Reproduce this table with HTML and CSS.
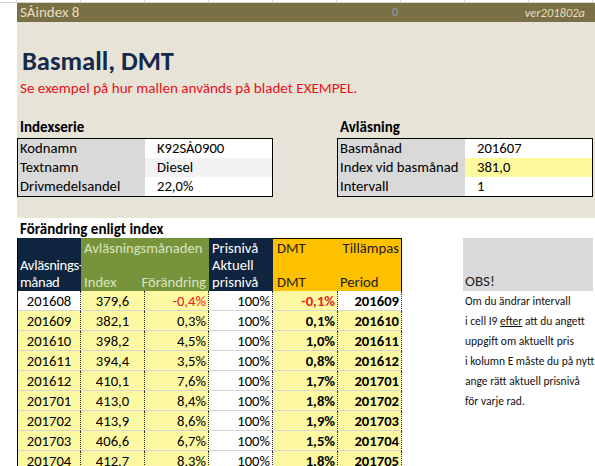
FILE: index.html
```html
<!DOCTYPE html>
<html lang="sv">
<head>
<meta charset="utf-8">
<title>SÅindex 8 – Basmall, DMT</title>
<link rel="stylesheet" href="styles.css">
</head>
<body>
<div class="strip"></div>
<div class="sheet">
  <header class="band">
    <span class="band-name">SÅindex 8</span>
    <span class="band-zero">0</span>
    <span class="band-ver">ver201802a</span>
  </header>

  <section class="intro">
    <h1 class="title">Basmall, DMT</h1>
    <p class="note">Se exempel på hur mallen används på bladet EXEMPEL.</p>
    <div class="panels">
      <div class="panel">
        <h2 class="panel-title">Indexserie</h2>
        <div class="kv">
          <div class="kv-label">Kodnamn</div><div class="kv-value">K92SÅ0900</div>
          <div class="kv-label">Textnamn</div><div class="kv-value kv-light">Diesel</div>
          <div class="kv-label">Drivmedelsandel</div><div class="kv-value">22,0%</div>
        </div>
      </div>
      <div class="panel">
        <h2 class="panel-title">Avläsning</h2>
        <div class="kv">
          <div class="kv-label">Basmånad</div><div class="kv-value">201607</div>
          <div class="kv-label">Index vid basmånad</div><div class="kv-value kv-yellow">381,0</div>
          <div class="kv-label">Intervall</div><div class="kv-value">1</div>
        </div>
      </div>
    </div>
  </section>

  <section class="lower">
    <h2 class="lower-title">Förändring enligt index</h2>
    <div class="lower-body">
      <div class="tbl">
        <div class="thead">
          <div class="th th-navy th-a"><span>Avläsnings-</span><span>månad</span></div>
          <div class="th th-green">
            <span class="th-pad">Avläsningsmånaden</span>
            <span class="th-pad">&nbsp;</span>
            <span class="th-split"><span>Index</span><span>Förändring</span></span>
          </div>
          <div class="th th-navy th-d"><span>Prisnivå</span><span>Aktuell</span><span>prisnivå</span></div>
          <div class="th th-orange">
            <span class="th-pair"><span>DMT</span><span class="th-right">Tillämpas</span></span>
            <span class="th-pair"><span>&nbsp;</span><span></span></span>
            <span class="th-pair"><span>DMT</span><span>Period</span></span>
          </div>
        </div>
        <div class="tbody" id="tbody"></div>
      </div>
      <aside class="obs">
        <div class="obs-head">OBS!</div>
        <p class="obs-line">Om du ändrar intervall</p>
        <p class="obs-line">i cell I9 <u>efter</u> att du angett</p>
        <p class="obs-line">uppgift om aktuellt pris</p>
        <p class="obs-line">i kolumn E måste du på nytt</p>
        <p class="obs-line">ange rätt aktuell prisnivå</p>
        <p class="obs-line">för varje rad.</p>
      </aside>
    </div>
  </section>
</div>
<script src="app.js"></script>
</body>
</html>
```

FILE: app.js
```js
const rows = [
  ["201608","379,6","-0,4%","100%","-0,1%","201609"],
  ["201609","382,1","0,3%","100%","0,1%","201610"],
  ["201610","398,2","4,5%","100%","1,0%","201611"],
  ["201611","394,4","3,5%","100%","0,8%","201612"],
  ["201612","410,1","7,6%","100%","1,7%","201701"],
  ["201701","413,0","8,4%","100%","1,8%","201702"],
  ["201702","413,9","8,6%","100%","1,9%","201703"],
  ["201703","406,6","6,7%","100%","1,5%","201704"],
  ["201704","412,7","8,3%","100%","1,8%","201705"]
];
const body = document.getElementById("tbody");
rows.forEach((r, i) => {
  const row = document.createElement("div");
  row.className = "tr" + (i === 0 ? " tr-first" : "");
  const cls = ["c-a","c-b","c-c","c-d","c-e","c-f"];
  r.forEach((v, j) => {
    const c = document.createElement("div");
    c.className = "td " + cls[j] + (v.startsWith("-") ? " neg" : "");
    c.textContent = v;
    row.appendChild(c);
  });
  body.appendChild(row);
});
```

FILE: styles.css
```css
* { box-sizing: border-box; margin: 0; padding: 0; }
html, body { width: 595px; height: 466px; overflow: hidden; background: #fff; }
body {
  font-family: Carlito, Lato, "Liberation Sans", sans-serif;
  font-size: 14.67px;
  color: #000;
}

.strip {
  height: 3px;
  border-bottom: 1px solid #d4d4d4;
  background: repeating-linear-gradient(90deg, transparent 0 16px, #d4d4d4 16px 17px, transparent 17px 64px);
}

.sheet { margin-left: 17px; }

.band {
  display: grid;
  grid-template-columns: 321px 64px 1fr;
  height: 19px;
  line-height: 19px;
  background: #7a7045;
  color: #e6dfc2;
}
.band-name { padding-left: 3px; font-size: 15px; }
.band-zero { text-align: right; padding-right: 4px; color: #8e9aa8; font-size: 12px; }
.band-ver { text-align: right; padding-right: 10px; font-style: italic; font-size: 12.5px; }

.intro {
  height: 196px;
  background: #e7e3d6;
  padding-top: 24px;
}
.title {
  font-size: 26.5px;
  line-height: 30px;
  font-weight: 700;
  color: #15294a;
  padding-left: 5px;
}
.note {
  margin-top: 3px;
  font-size: 15.1px;
  line-height: 18px;
  color: #e8111b;
  padding-left: 3px;
}

.panels {
  display: flex;
  gap: 64px;
  margin-top: 21px;
}
.panel { width: 256px; }
.panel-title {
  font-size: 15px;
  font-weight: 700;
  line-height: 18px;
  padding-left: 3px;
  margin-bottom: 2px;
}
.kv {
  display: grid;
  grid-template-columns: 127px 1fr;
  grid-auto-rows: 19px;
  border: 1px solid #000;
  line-height: 19px;
}
.kv-label { background: #d9d9d9; padding-left: 2px; white-space: nowrap; }
.kv-value { background: #fff; padding-left: 12px; }
.kv-light { background: #f2f2f2; }
.kv-yellow { background: #fdfa9e; }

.lower { padding-top: 2px; }
.lower-title {
  font-size: 15px;
  font-weight: 700;
  line-height: 18px;
  padding-left: 3px;
}
.lower-body {
  display: flex;
  gap: 61px;
}

.tbl { width: 385px; border-left: 1px solid #000; }
.thead {
  display: grid;
  grid-template-columns: 63px 128px 64px 129px;
  height: 53px;
}
.th {
  display: flex;
  flex-direction: column;
  padding-top: 2px;
  line-height: 17px;
  white-space: nowrap;
}
.th-navy { background: #0f243e; color: #fff; }
.th-a { justify-content: flex-end; padding-left: 2px; letter-spacing: -0.35px; }
.th-d { padding-left: 3px; }
.th-green { background: #77933c; color: #d9e5c1; }
.th-pad { padding-left: 3px; }
.th-split { display: flex; justify-content: space-between; padding: 0 3px; }
.th-orange {
  background: #ffc000;
  color: #1d1d1d;
  border-top: 1px solid #000;
  border-right: 1px solid #000;
  padding-top: 1px;
}
.th-pair { display: grid; grid-template-columns: 65px 63px; }
.th-pair > span:first-child { padding-left: 4px; }
.th-pair > span:last-child { padding-left: 2px; }
.th-pair > .th-right { text-align: right; padding-right: 2px; }

.tr {
  display: grid;
  grid-template-columns: 63px 64px 64px 64px 65px 64px;
  height: 20px;
}
.td {
  height: 20px;
  padding-top: 2px;
  line-height: 17px;
  border-right: 1px dotted #222;
  border-bottom: 1px solid #d6d6d6;
  background: #fdf9a2;
  white-space: nowrap;
}
.c-a, .c-b { text-align: center; }
.c-c, .c-d, .c-e, .c-f { text-align: right; padding-right: 2px; }
.c-d { background: #fff; }
.c-e, .c-f { font-weight: 700; }
.tr-first .c-a, .tr-first .c-f { background: #fff; }
.neg { color: #e8231a; }

.obs { width: 130px; }
.obs-head {
  height: 53px;
  background: #d9d9d9;
  display: flex;
  align-items: flex-end;
  padding-left: 2px;
  padding-bottom: 1px;
  font-size: 15px;
  line-height: 18px;
  color: #1d1d1d;
}
.obs-line {
  font-size: 11.5px;
  line-height: 20px;
  height: 20px;
  padding-left: 2px;
  white-space: nowrap;
  color: #111;
}
```
